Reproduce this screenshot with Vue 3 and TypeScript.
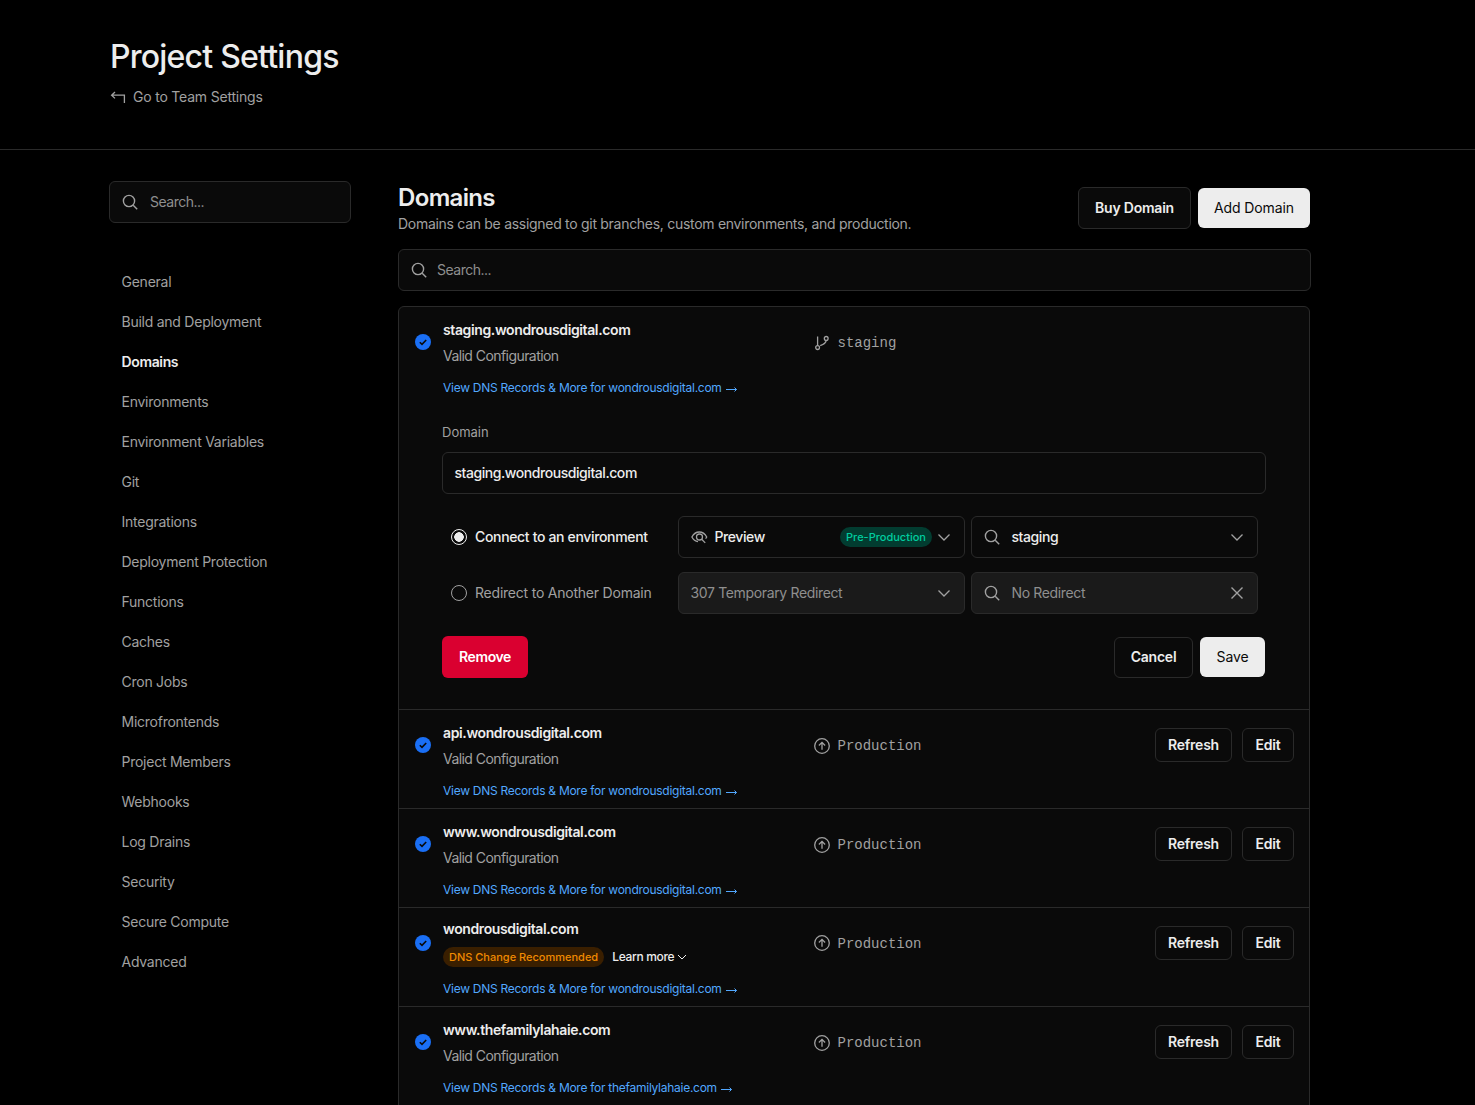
<script setup lang="ts">
interface DomainRow {
  name: string
  apex: string
  warn?: boolean
}

const navItems: string[] = [
  "General", "Build and Deployment", "Domains", "Environments", "Environment Variables",
  "Git", "Integrations", "Deployment Protection", "Functions", "Caches", "Cron Jobs",
  "Microfrontends", "Project Members", "Webhooks", "Log Drains", "Security",
  "Secure Compute", "Advanced",
]

const rows: DomainRow[] = [
  { name: "api.wondrousdigital.com", apex: "wondrousdigital.com" },
  { name: "www.wondrousdigital.com", apex: "wondrousdigital.com" },
  { name: "wondrousdigital.com", apex: "wondrousdigital.com", warn: true },
  { name: "www.thefamilylahaie.com", apex: "thefamilylahaie.com" },
]
</script>

<template>
  <div class="page">
    <header class="top">
      <h1>Project Settings</h1>
      <a class="back">
        <svg width="16" height="16" viewBox="0 0 16 16" fill="none" stroke="currentColor" stroke-width="1.3">
          <path d="M5 3 1.6 6.2 5 9.4M2 6.2h12.4V14" />
        </svg>
        Go to Team Settings
      </a>
    </header>

    <div class="body">
      <aside class="side">
        <div class="search side-search">
          <svg class="glass" width="16" height="16" viewBox="0 0 16 16" fill="none" stroke="currentColor" stroke-width="1.4">
            <circle cx="7" cy="7" r="5.6" /><path d="m11.2 11.2 4 4" />
          </svg>
          <span class="ph">Search...</span>
        </div>
        <nav>
          <a v-for="item in navItems" :key="item" :class="{ on: item === 'Domains' }">{{ item }}</a>
        </nav>
      </aside>

      <main class="main">
        <div class="head">
          <div>
            <h2>Domains</h2>
            <p>Domains can be assigned to git branches, custom environments, and production.</p>
          </div>
          <div class="head-btns">
            <button class="btn dark tall">Buy Domain</button>
            <button class="btn light add">Add Domain</button>
          </div>
        </div>

        <div class="search main-search">
          <svg class="glass" width="16" height="16" viewBox="0 0 16 16" fill="none" stroke="currentColor" stroke-width="1.4">
            <circle cx="7" cy="7" r="5.6" /><path d="m11.2 11.2 4 4" />
          </svg>
          <span class="ph">Search...</span>
        </div>

        <section class="card">
          <div class="row first">
            <div class="row-top">
              <svg class="check" width="16" height="16" viewBox="0 0 16 16">
                <circle cx="8" cy="8" r="8" fill="#1a6ff5" />
                <path d="m4.8 8.2 2.2 2.2 4.2-4.4" fill="none" stroke="#0a0a0a" stroke-width="1.6" />
              </svg>
              <div class="info">
                <div class="name">staging.wondrousdigital.com</div>
                <div class="sub">Valid Configuration</div>
              </div>
              <div class="env">
                <svg width="16" height="16" viewBox="0 0 16 16" fill="none" stroke="currentColor" stroke-width="1.3">
                  <circle cx="3.6" cy="12.6" r="1.9" /><circle cx="12.2" cy="3.4" r="1.9" />
                  <path d="M3.6 10.7V1.5M12.2 5.3c0 3-2.4 4-6 5.4" />
                </svg>
                staging
              </div>
            </div>
            <a class="dns">View DNS Records &amp; More for wondrousdigital.com
              <svg class="arrow" width="11" height="8" viewBox="0 0 11 8" fill="none" stroke="currentColor" stroke-width="1">
                <path d="M0 4.500h10.500M8.500 2.500l2 2-2 2" />
              </svg>
            </a>

            <form class="edit" @submit.prevent>
              <label class="lbl">Domain</label>
              <div class="field">staging.wondrousdigital.com</div>

              <div class="opts">
                <div class="radio-line active"><span class="radio on"></span><span class="rtext">Connect to an environment</span></div>
                <div class="select">
                  <svg class="lead" width="17" height="16" viewBox="0 0 17 16" fill="none" stroke="currentColor" stroke-width="1.3">
                    <path d="M7 12.600C4.300 12.300 2.200 10.500.900 8 2.500 5 5.300 3 8.300 3s5.800 2 7.400 5c-.3.600-.7 1.100-1.100 1.600" />
                    <circle cx="8.500" cy="8" r="3" /><path d="m10.700 10.200 3.500 3.700" />
                  </svg>
                  <span class="val">Preview</span>
                  <span class="pill green">Pre-Production</span>
                  <svg class="chev" width="16" height="16" viewBox="0 0 16 16" fill="none" stroke="currentColor" stroke-width="1.3">
                    <path d="m2.500 5.500 5.500 5.500 5.500-5.500" />
                  </svg>
                </div>
                <div class="select">
                  <svg class="lead wide" width="16" height="16" viewBox="0 0 16 16" fill="none" stroke="currentColor" stroke-width="1.4">
                    <circle cx="7" cy="7" r="5.6" /><path d="m11.2 11.2 4 4" />
                  </svg>
                  <span class="val">staging</span>
                  <svg class="chev end" width="16" height="16" viewBox="0 0 16 16" fill="none" stroke="currentColor" stroke-width="1.3">
                    <path d="m2.500 5.500 5.500 5.500 5.500-5.500" />
                  </svg>
                </div>

                <div class="radio-line"><span class="radio"></span><span class="rtext">Redirect to Another Domain</span></div>
                <div class="select off">
                  <span class="val">307 Temporary Redirect</span>
                  <svg class="chev end" width="16" height="16" viewBox="0 0 16 16" fill="none" stroke="currentColor" stroke-width="1.3">
                    <path d="m2.500 5.500 5.500 5.500 5.500-5.500" />
                  </svg>
                </div>
                <div class="select off">
                  <svg class="lead wide" width="16" height="16" viewBox="0 0 16 16" fill="none" stroke="currentColor" stroke-width="1.4">
                    <circle cx="7" cy="7" r="5.6" /><path d="m11.2 11.2 4 4" />
                  </svg>
                  <span class="val">No Redirect</span>
                  <svg class="chev end" width="16" height="16" viewBox="0 0 16 16" fill="none" stroke="currentColor" stroke-width="1.4">
                    <path d="m2.500 2.500 11 11M13.500 2.500l-11 11" />
                  </svg>
                </div>
              </div>

              <div class="actions">
                <button class="btn red">Remove</button>
                <div class="actions-right">
                  <button class="btn dark cancel">Cancel</button>
                  <button class="btn light save">Save</button>
                </div>
              </div>
            </form>
          </div>

          <div v-for="row in rows" :key="row.name" class="row" :class="{ warned: row.warn }">
            <div class="row-top">
              <svg class="check" width="16" height="16" viewBox="0 0 16 16">
                <circle cx="8" cy="8" r="8" fill="#1a6ff5" />
                <path d="m4.800 8.200 2.200 2.200 4.200-4.400" fill="none" stroke="#0a0a0a" stroke-width="1.6" />
              </svg>
              <div class="info">
                <div class="name">{{ row.name }}</div>
                <div v-if="row.warn" class="sub warn-line">
                  <span class="pill amber">DNS Change Recommended</span>
                  <span class="learn">Learn more
                    <svg width="10" height="10" viewBox="0 0 10 10" fill="none" stroke="currentColor" stroke-width="1">
                      <path d="m1 3 4 4 4-4" />
                    </svg>
                  </span>
                </div>
                <div v-else class="sub">Valid Configuration</div>
              </div>
              <div class="env">
                <svg width="16" height="16" viewBox="0 0 16 16" fill="none" stroke="currentColor" stroke-width="1.3">
                  <circle cx="8" cy="8" r="7.300" /><path d="M8 11.800V4.600M4.900 7.500 8 4.400l3.100 3.100" />
                </svg>
                Production
              </div>
              <div class="row-btns">
                <button class="btn dark small">Refresh</button>
                <button class="btn dark small">Edit</button>
              </div>
            </div>
            <a class="dns">View DNS Records &amp; More for {{ row.apex }}
              <svg class="arrow" width="11" height="8" viewBox="0 0 11 8" fill="none" stroke="currentColor" stroke-width="1">
                <path d="M0 4.500h10.500M8.500 2.500l2 2-2 2" />
              </svg>
            </a>
          </div>
        </section>
      </main>
    </div>
  </div>
</template>

<style>
html, body { margin: 0; background: #000; }
</style>

<style scoped>
.page {
  height: 100vh;
  overflow: hidden;
  background: #000;
  color: #ededed;
  font-family: Inter, "Noto Sans", sans-serif;
  font-size: 14px;
  letter-spacing: -0.22px;
}
.top {
  height: 149px;
  border-bottom: 1px solid #2a2a2a;
  padding-left: 110px;
}
h1 {
  margin: 0;
  padding-top: 37px;
  font-size: 32px;
  line-height: 40px;
  font-weight: 500;
  letter-spacing: -0.78px;
}
.back {
  display: flex;
  align-items: center;
  gap: 7px;
  margin-top: 10px;
  color: #a1a1a1;
  line-height: 20px;
  letter-spacing: -0.2px;
}
.body {
  display: flex;
  padding: 31px 0 0 109px;
}
.side { width: 242px; flex: none; }
.search {
  display: flex;
  align-items: center;
  box-sizing: border-box;
  height: 42px;
  background: #0a0a0a;
  border: 1px solid #2a2a2a;
  border-radius: 6px;
  color: #8f8f8f;
}
.ph { letter-spacing: -0.5px; margin-top: -2px; }
.side-search .ph { margin-left: 1px; }
.main-search .ph { margin-left: -1px; }
.glass { margin: 0 11px 0 12px; flex: none; color: #a1a1a1; }
nav { display: flex; flex-direction: column; margin-top: 39px; }
nav a { height: 40px; line-height: 40px; padding-left: 12.5px; color: #a1a1a1; letter-spacing: -0.25px; }
nav a.on { color: #ededed; font-weight: 600; letter-spacing: -0.36px; }
.main { width: 913px; margin-left: 47px; }
.head {
  display: flex;
  justify-content: space-between;
  height: 68px;
  padding-right: 1px;
}
h2 {
  margin: 3px 0 0;
  font-size: 24px;
  line-height: 28px;
  font-weight: 600;
  letter-spacing: -0.66px;
}
.head p { margin: 2px 0 0; line-height: 20px; color: #a1a1a1; letter-spacing: -0.29px; }
.head-btns { display: flex; gap: 7px; align-items: center; margin-top: 6px; height: 42px; }
.btn {
  font: inherit;
  letter-spacing: inherit;
  box-sizing: border-box;
  border-radius: 6px;
  border: 1px solid transparent;
  padding: 0 0 2px;
  cursor: pointer;
}
.dark { background: #0a0a0a; border-color: #2a2a2a; color: #ededed; font-weight: 600; }
.light { background: #ededed; color: #0a0a0a; font-weight: 400; letter-spacing: -0.1px; }
.tall { width: 113px; height: 42px; }
.add { width: 112px; height: 40px; }
.card {
  margin-top: 15px;
  width: 912px;
  box-sizing: border-box;
  background: #0a0a0a;
  border: 1px solid #2a2a2a;
  border-radius: 6px 6px 0 0;
}
.row {
  height: 99px;
  box-sizing: border-box;
  border-top: 1px solid #2a2a2a;
  padding: 13px 15px 10px 16px;
}
.row.first { height: 402px; border-top: 0; }
.row.warned { padding-top: 11px; }
.row-top { display: flex; align-items: center; }
.check { flex: none; margin: -3px 12px 0 0; }
.warned .check { margin-top: -1px; }
.info { width: 371px; flex: none; }
.name { line-height: 20px; font-weight: 600; letter-spacing: -0.38px; }
.sub { margin-top: 6px; line-height: 20px; color: #a1a1a1; letter-spacing: -0.56px; }
.warn-line { display: flex; align-items: center; margin-top: 8px; }
.pill {
  display: inline-block;
  height: 20px;
  line-height: 20px;
  padding: 0 6px;
  border-radius: 10px;
  font-size: 11px;
  font-weight: 500;
  letter-spacing: 0;
}
.amber { background: #3a1f00; color: #f08a00; }
.green { background: #023c30; color: #00cc9f; margin-left: auto; padding: 0 6px 0 6.5px; }
.learn {
  display: inline-flex;
  align-items: center;
  gap: 3px;
  margin-left: 8px;
  color: #ededed;
  font-size: 12px;
  font-weight: 500;
  letter-spacing: -0.33px;
}
.env {
  display: flex;
  align-items: center;
  gap: 7.5px;
  font-family: "Liberation Mono", monospace;
  letter-spacing: 0;
  color: #a1a1a1;
}
.env svg { margin-top: -1px; }
.warned .env { margin-top: 1px; }
.row-btns { display: flex; gap: 10px; margin: -3px 0 0 auto; }
.warned .row-btns { margin-top: -1px; }
.small { height: 34px; width: 77px; padding-bottom: 0; }
.small:last-child { width: 52px; }
.dns {
  display: block;
  margin-top: 14px;
  margin-left: 28px;
  font-size: 12px;
  line-height: 16px;
  color: #52a8ff;
  letter-spacing: -0.27px;
}
.arrow { margin-left: 1px; vertical-align: -1px; }
.edit { margin: 26px 28px 0 27px; }
.lbl { display: block; line-height: 20px; color: #a1a1a1; font-size: 13px; letter-spacing: 0; }
.field {
  box-sizing: border-box;
  height: 42px;
  margin-top: 10px;
  padding-left: 11.5px;
  line-height: 40px;
  border: 1px solid #2a2a2a;
  border-radius: 6px;
  font-weight: 500;
  letter-spacing: -0.44px;
}
.opts {
  display: grid;
  grid-template-columns: 221px 287px 287px;
  column-gap: 6px;
  row-gap: 14px;
  margin-top: 22px;
  padding-left: 9px;
}
.radio-line { display: flex; align-items: center; gap: 8px; color: #a1a1a1; letter-spacing: -0.22px; }
.radio-line.active { color: #ededed; font-weight: 500; letter-spacing: -0.34px; }
.rtext { margin-top: -2px; }
.radio {
  box-sizing: border-box;
  width: 16px;
  height: 16px;
  border: 1px solid #a1a1a1;
  border-radius: 50%;
  flex: none;
}
.radio.on {
  border-color: #ededed;
  background: radial-gradient(circle, #ededed 0 4.5px, transparent 5px);
}
.select {
  display: flex;
  align-items: center;
  box-sizing: border-box;
  height: 42px;
  padding: 0 12px 0 11.5px;
  border: 1px solid #2a2a2a;
  border-radius: 6px;
}
.select.off { background: #1a1a1a; color: #8f8f8f; }
.select.off .val { font-weight: 400; letter-spacing: -0.35px; }
.val { font-weight: 500; letter-spacing: -0.42px; margin-top: -2px; }
.lead { margin-right: 7px; flex: none; color: #a1a1a1; }
.lead.wide { margin-right: 12px; }
.chev { flex: none; margin-left: 4px; color: #a1a1a1; }
.chev.end { margin-left: auto; }
.actions {
  display: flex;
  justify-content: space-between;
  align-items: center;
  margin-top: 22px;
  padding-right: 1px;
}
.actions-right { display: flex; gap: 7px; align-items: center; }
.red { width: 86px; height: 42px; background: #da0030; color: #fff; font-weight: 600; letter-spacing: -0.4px; }
.cancel { width: 79px; height: 41px; }
.save { width: 65px; height: 40px; }
</style>
